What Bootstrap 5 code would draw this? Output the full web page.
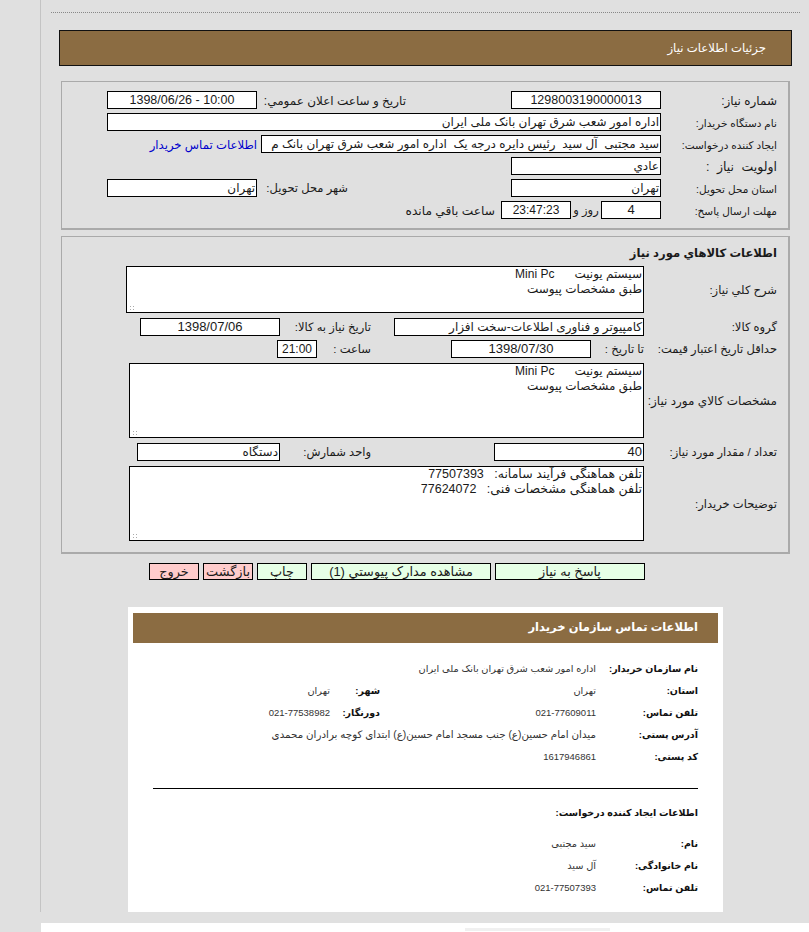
<!DOCTYPE html>
<html lang="fa" dir="rtl">
<head>
<meta charset="utf-8">
<title>جزئیات اطلاعات نیاز</title>
<link href="https://cdn.jsdelivr.net/npm/bootstrap@5.3.0/dist/css/bootstrap.min.css" rel="stylesheet">
<style>
html,body{height:932px;overflow:hidden}
body{background:#e0e0e0;font-family:"Liberation Sans","DejaVu Sans",sans-serif;font-size:11px;color:#1a1a1a;line-height:1.2}
.shell{margin-left:40px;width:769px;height:912px;border-left:1px solid #c4c4c4;padding:12px 9px 0 10px;overflow:hidden}
.dots{border-top:1px dotted #888;height:18px}
.head-bar{margin:0 8px;height:36px;background:#8b6c42;border:1px solid #111;color:#fff;padding:0 25px;font-size:11.7px}
.panel{margin-right:10px;width:729px;background:#e0e0e0;border:1px solid #aaa;border-bottom-width:2px;border-right-width:2px;padding-right:11px}
.panel-a{height:149px;margin-top:15px;padding-top:9px}
.panel-b{height:318px;margin-top:6px}
.frow{height:18px;margin-bottom:4px}
.fld{width:auto;height:18px;min-height:0;padding:0 1px;border:1px solid #000;border-radius:0;background:#fff;color:#1a1a1a;font:inherit;font-size:12px;line-height:16px;white-space:nowrap;overflow:hidden;flex:none}
.num{font-size:13px;text-align:center}
.num-id{font-size:12.5px}
.num-time{font-size:12px}
.num-end{text-align:right}
.lab{flex:none;font-size:11.5px;white-space:nowrap;padding-top:2px}
.lab-tight{font-size:10.5px}
.lab-wide{font-size:12px}
.lab-remain{font-size:12.2px}
.lab-spaced{font-size:12.5px;word-spacing:4px}
.w116{width:116px}.w133{width:133px}.w150{width:150px}.w140{width:140px}.w143{width:143px}.w250{width:250px}.w400{width:400px}.w554{width:554px}.w40{width:40px}.w60{width:60px}.w70{width:70px}.w30{width:30px}.w53{width:53px}
.gap-a{width:254px;padding-right:105px}
.gap-b{width:114px;padding-right:23px}
.gap-c{width:214px;padding-right:123px}
.gap-d{width:254px;padding-right:163px}
.gap-e{width:134px;padding-right:80px}
.gap-f{padding-right:6px}
.link-buyer{font-size:11.7px;color:#00c;text-decoration:none;margin-right:4px;padding-top:2px;white-space:nowrap}
.sec-title{font-size:11.6px;font-weight:700;padding-top:9px;height:29px}
.area-wrap{position:relative;flex:none}
.area{display:block;height:47px;padding:0 1px;border:1px solid #000;border-radius:0;background:#fff;color:#1a1a1a;font-size:12px;line-height:15px;font-family:inherit;resize:none}
.area:focus{box-shadow:none;border-color:#000;background:#fff}
.area-note{font-size:12.5px}
.grip{position:absolute;left:3px;bottom:2px;width:6px;height:6px;background:radial-gradient(circle,#aaa .7px,transparent .8px) 0 0/3px 3px}
.ta-518{width:518px}.ta-515{width:515px;height:75px}
.trow{margin-bottom:5px}
.btn-row{margin:9px 0 0 0;padding-right:155px;height:44px;gap:4px}
.act{height:17px;padding:0;border:1px solid #000;border-radius:0;font-size:12.9px;line-height:15px;color:#1a1a1a;background:#e6ffe6}
.act:hover{background:#e6ffe6;color:#1a1a1a;border-color:#000}
.act-red{background:#ffcccc}.act-red:hover{background:#ffcccc}
.w180{width:180px}.w50{width:50px}
.contact{margin-right:77px;width:595px;height:305px;background:#fff;padding:6px 5px}
.c-bar{height:30px;background:#8b6c42;color:#fff;font-weight:700;font-size:11.5px;padding:0 20px;letter-spacing:.2px}
.c-body{padding:15px 20px 0 20px}
.c-row{height:22px;font-size:9.8px;color:#333}
.c-lab{width:102px;flex:none;font-size:9.5px;font-weight:700;color:#111}
.c-val{width:216px;flex:none}
.c-lab2{width:50px;flex:none;font-size:9.5px;font-weight:700;color:#111}
.c-num{font-size:9.5px}
.c-addr{font-size:10.3px}
.c-rule{border:0;border-top:1px solid #000;opacity:1;margin:20px 0 0 0}
.c-sub{font-size:9.5px;font-weight:700;color:#111;margin:18px 0 12px;height:14px}
.foot{position:absolute;left:41px;right:0;top:923px;height:9px;background:#fff;overflow:hidden;padding:5px 199px 0 0}
.foot-mark{width:145px;height:3px;background:#f0f0f0}
</style>
</head>
<body>
<div class="shell">
  <div class="dots"></div>
  <div class="head-bar d-flex align-items-center">جزئیات اطلاعات نیاز</div>

  <div class="panel panel-a">
    <div class="frow d-flex align-items-center"><div class="lab lab-wide w116">شماره نیاز:</div><div class="form-control fld num num-id w150">1298003190000013</div><div class="lab lab-wide gap-a">تاریخ و ساعت اعلان عمومي:</div><div class="form-control fld num num-id w150">10:00 - 1398/06/26</div></div>
    <div class="frow d-flex align-items-center"><div class="lab lab-tight w116">نام دستگاه خریدار:</div><div class="form-control fld w554">اداره امور شعب شرق تهران بانک ملی ایران</div></div>
    <div class="frow d-flex align-items-center"><div class="lab lab-tight w116">ایجاد کننده درخواست:</div><div class="form-control fld w400">سید مجتبی&nbsp; آل سید&nbsp; رئیس دایره درجه یک&nbsp; اداره امور شعب شرق تهران بانک م</div><a class="link-buyer" href="#">اطلاعات تماس خریدار</a></div>
    <div class="frow d-flex align-items-center"><div class="lab lab-spaced w116">اولویت نیاز :</div><div class="form-control fld w150">عادي</div></div>
    <div class="frow d-flex align-items-center"><div class="lab lab-tight w116">استان محل تحویل:</div><div class="form-control fld w150">تهران</div><div class="lab gap-d">شهر محل تحویل:</div><div class="form-control fld w150">تهران</div></div>
    <div class="frow d-flex align-items-center"><div class="lab lab-tight w116">مهلت ارسال پاسخ:</div><div class="form-control fld num w60">4</div><div class="lab w30 text-center">روز و</div><div class="form-control fld num num-time w70">23:47:23</div><div class="lab lab-remain gap-f">ساعت باقي مانده</div></div>
  </div>

  <div class="panel panel-b">
    <div class="sec-title">اطلاعات کالاهاي مورد نياز</div>
    <div class="d-flex align-items-center trow"><div class="lab w133">شرح کلي نیاز:</div><div class="area-wrap"><textarea class="form-control area ta-518" readonly>سیستم یونیت      Mini Pc 
طبق مشخصات پیوست</textarea><span class="grip"></span></div></div>
    <div class="frow d-flex align-items-center"><div class="lab w133">گروه کالا:</div><div class="form-control fld w250">کامپیوتر و فناوری اطلاعات-سخت افزار</div><div class="lab gap-b">تاریخ نیاز به کالا:</div><div class="form-control fld num w140">1398/07/06</div></div>
    <div class="frow d-flex align-items-center trow"><div class="lab w133">حداقل تاریخ اعتبار قیمت:</div><div class="lab w53">تا تاریخ :</div><div class="form-control fld num w140">1398/07/30</div><div class="lab gap-e">ساعت :</div><div class="form-control fld num num-time w40">21:00</div></div>
    <div class="d-flex align-items-center trow"><div class="lab lab-wide w133">مشخصات کالاي مورد نیاز:</div><div class="area-wrap"><textarea class="form-control area ta-515" readonly>سیستم یونیت      Mini Pc 
طبق مشخصات پیوست</textarea><span class="grip"></span></div></div>
    <div class="frow d-flex align-items-center trow"><div class="lab w133">تعداد / مقدار مورد نیاز:</div><div class="form-control fld num num-end w150">40</div><div class="lab gap-c">واحد شمارش:</div><div class="form-control fld w143">دستگاه</div></div>
    <div class="d-flex align-items-center"><div class="lab w133">توضیحات خریدار:</div><div class="area-wrap"><textarea class="form-control area area-note ta-515" readonly>تلفن هماهنگی فرآیند سامانه:   77507393
تلفن هماهنگی مشخصات فنی:   77624072</textarea><span class="grip"></span></div></div>
  </div>

  <div class="btn-row d-flex">
    <button type="button" class="btn act w150">پاسخ به نیاز</button>
    <button type="button" class="btn act w180">مشاهده مدارک پیوستي (1)</button>
    <button type="button" class="btn act w50">چاپ</button>
    <button type="button" class="btn act act-red w50">بازگشت</button>
    <button type="button" class="btn act act-red w50">خروج</button>
  </div>

  <div class="contact">
    <div class="c-bar d-flex align-items-center">اطلاعات تماس سازمان خریدار</div>
    <div class="c-body">
      <div class="c-row d-flex align-items-center"><div class="c-lab">نام سازمان خریدار:</div><div>اداره امور شعب شرق تهران بانک ملی ایران</div></div>
      <div class="c-row d-flex align-items-center"><div class="c-lab">استان:</div><div class="c-val">تهران</div><div class="c-lab2">شهر:</div><div>تهران</div></div>
      <div class="c-row d-flex align-items-center"><div class="c-lab">تلفن تماس:</div><div class="c-val c-num">021-77609011</div><div class="c-lab2">دورنگار:</div><div class="c-num">021-77538982</div></div>
      <div class="c-row d-flex align-items-center"><div class="c-lab">آدرس پستی:</div><div class="c-addr">میدان امام حسین(ع) جنب مسجد امام حسین(ع) ابتدای کوچه برادران محمدی</div></div>
      <div class="c-row d-flex align-items-center"><div class="c-lab">کد پستی:</div><div class="c-num">1617946861</div></div>
      <hr class="c-rule">
      <div class="c-sub">اطلاعات ایجاد کننده درخواست:</div>
      <div class="c-row d-flex align-items-center"><div class="c-lab">نام:</div><div>سید مجتبی</div></div>
      <div class="c-row d-flex align-items-center"><div class="c-lab">نام خانوادگی:</div><div>آل سید</div></div>
      <div class="c-row d-flex align-items-center"><div class="c-lab">تلفن تماس:</div><div class="c-num">021-77507393</div></div>
    </div>
  </div>
</div>
<div class="foot"><div class="foot-mark"></div></div>
</body>
</html>
